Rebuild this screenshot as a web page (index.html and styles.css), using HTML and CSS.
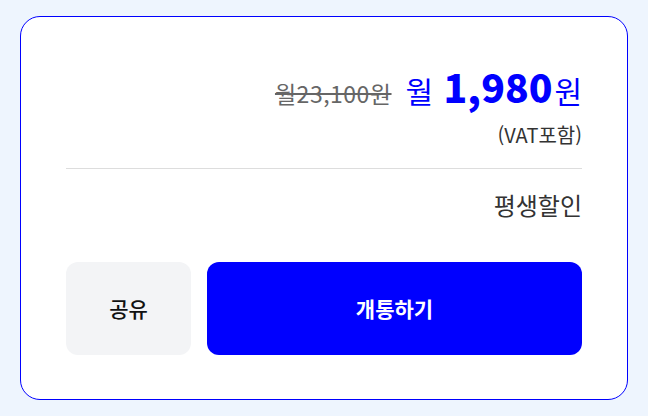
FILE: index.html
```html
<!DOCTYPE html>
<html lang="ko">
<head>
  <meta charset="UTF-8" />
  <meta name="viewport" content="width=device-width, initial-scale=1.0"/>
  <title>요금제 가입</title>
  <link rel="stylesheet" href="styles.css">
</head>
<body>
  <div class="plan-card">
    <div class="price-row">
      <span class="old-price">월23,100원</span>
      <span class="new-price">
        <span class="unit">월</span>
        <span class="amount">1,980</span><span class="unit">원</span>
      </span>
    </div>
    <p class="vat">(VAT포함)</p>

    <hr class="divider" />

    <p class="discount">평생할인</p>

    <div class="actions">
      <button class="share-button">공유</button>
      <button class="join-button">개통하기</button>
    </div>
  </div>
</body>
</html>
```

FILE: styles.css
```css
* {
  margin: 0;
  padding: 0;
  box-sizing: border-box;
}

body {
  font-family: "Noto Sans CJK KR", "Noto Sans", sans-serif;
  background-color: #eef5fe;
  color: #333333;
  padding: 16px 20px 16px 20px;
}

.plan-card {
  background-color: #ffffff;
  border: 1px solid #0000ff;
  border-radius: 20px;
  padding: 46px 45px 44px 45px;
  display: flex;
  flex-direction: column;
}

.price-row {
  display: flex;
  justify-content: flex-end;
  align-items: baseline;
  gap: 14px;
  line-height: 1.2;
}

.old-price {
  font-size: 23px;
  color: #666666;
  text-decoration: line-through;
  letter-spacing: 0.5px;
}

.new-price {
  color: #0000ff;
}

.new-price .unit {
  font-size: 30px;
}

.new-price .amount {
  font-size: 39px;
  font-weight: 800;
  margin-left: 6px;
  margin-right: 2px;
}

.vat {
  text-align: right;
  font-size: 20px;
  color: #333333;
  margin-top: 13px;
  line-height: 1.2;
}

.divider {
  border: none;
  border-top: 1px solid #dddddd;
  margin: 21px 0 20px;
}

.discount {
  text-align: right;
  font-size: 24px;
  color: #333333;
  line-height: 1.3;
}

.actions {
  display: flex;
  gap: 16px;
  margin-top: 42px;
}

.actions button {
  height: 93px;
  border: none;
  border-radius: 12px;
  font-family: inherit;
  font-size: 21px;
  cursor: pointer;
}

.share-button {
  width: 125px;
  background-color: #f3f4f6;
  color: #111111;
  font-weight: 500;
}

.join-button {
  flex: 1;
  background-color: #0000ff;
  color: #ffffff;
  font-weight: 700;
}
```
